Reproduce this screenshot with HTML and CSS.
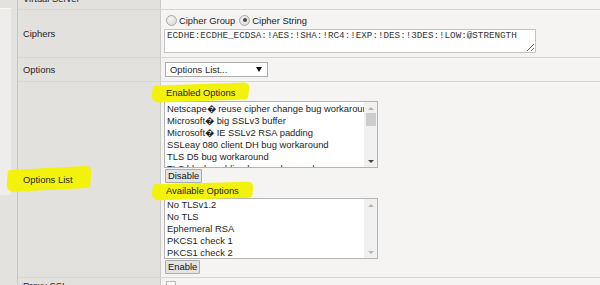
FILE: index.html
```html
<!DOCTYPE html>
<html lang="en">
<head>
    <meta charset="UTF-8">
    <title>SSL Profile - Ciphers</title>
    <link rel="stylesheet" href="styles.css">
</head>
<body>
    <div class="page">
        <div class="rail"><div class="rail-tab"></div></div>
        <div class="form">
            <div class="row row-top">
                <div class="label">Virtual Server</div>
                <div class="value"></div>
            </div>
            <div class="row row-ciphers">
                <div class="label">Ciphers</div>
                <div class="value">
                    <div class="radios">
                        <span class="radio"></span><span class="radio-text">Cipher Group</span>
                        <span class="radio checked"></span><span class="radio-text">Cipher String</span>
                    </div>
                    <textarea class="cipher-text" spellcheck="false">ECDHE:ECDHE_ECDSA:!AES:!SHA:!RC4:!EXP:!DES:!3DES:!LOW:@STRENGTH</textarea>
                </div>
            </div>
            <div class="row row-options">
                <div class="label">Options</div>
                <div class="value">
                    <div class="dropdown">
                        <span>Options List...</span>
                        <span class="dropdown-arrow"></span>
                    </div>
                </div>
            </div>
            <div class="row row-list">
                <div class="label"><span class="marker marker-label">Options List</span></div>
                <div class="value">
                    <div class="caption"><span class="marker marker-enabled">Enabled Options</span></div>
                    <div class="listbox listbox-enabled">
                        <div class="items">
                            <div class="item">Netscape&#xFFFD; reuse cipher change bug workaround</div>
                            <div class="item">Microsoft&#xFFFD; big SSLv3 buffer</div>
                            <div class="item">Microsoft&#xFFFD; IE SSLv2 RSA padding</div>
                            <div class="item">SSLeay 080 client DH bug workaround</div>
                            <div class="item">TLS D5 bug workaround</div>
                            <div class="item">TLS block padding bug workaround</div>
                        </div>
                        <div class="scrollbar">
                            <span class="arrow-up"></span>
                            <span class="thumb"></span>
                            <span class="arrow-down active"></span>
                        </div>
                    </div>
                    <button class="btn">Disable</button>
                    <div class="caption caption-available"><span class="marker marker-available">Available Options</span></div>
                    <div class="listbox listbox-available">
                        <div class="items">
                            <div class="item">No TLSv1.2</div>
                            <div class="item">No TLS</div>
                            <div class="item">Ephemeral RSA</div>
                            <div class="item">PKCS1 check 1</div>
                            <div class="item">PKCS1 check 2</div>
                        </div>
                        <div class="scrollbar">
                            <span class="arrow-up"></span>
                            <span class="arrow-down"></span>
                        </div>
                    </div>
                    <button class="btn">Enable</button>
                </div>
            </div>
            <div class="row row-proxy">
                <div class="label">Proxy SSL</div>
                <div class="value"><span class="checkbox"></span></div>
            </div>
        </div>
    </div>
</body>
</html>
```

FILE: styles.css
```css
body {
    margin: 0;
    background: #f5f4f2;
    font-family: 'Liberation Sans', Arial, sans-serif;
    font-size: 9.4px;
    color: #1e1e1e;
    overflow: hidden;
}

.page {
    display: flex;
    height: 285px;
    overflow: hidden;
}

.rail {
    width: 17px;
    flex-shrink: 0;
    background: #e3e2df;
    border-right: 1px solid #c6c5c2;
}

.rail-tab {
    width: 11px;
    height: 186px;
    background: #eeedeb;
    border-top: 1px solid #f8f8f8;
    margin-top: 8px;
}

.form {
    flex: 1;
    margin-top: -13px;
}

.row {
    display: flex;
    border-bottom: 1px solid #d7d6d3;
}

.label {
    box-sizing: border-box;
    width: 143px;
    flex-shrink: 0;
    padding-left: 5px;
    background: #e2e1de;
    border-right: 1px solid #cbcac7;
    display: flex;
    align-items: center;
}

.value {
    flex: 1;
    padding: 4px 3px;
}

.row-top { height: 22px; }
.row-ciphers { height: 47px; }
.row-options { height: 23px; }
.row-list { height: 195px; }
.row-proxy { height: 30px; }

.row-list .value { padding-top: 5px; }
.row-proxy .label { align-items: flex-start; padding-top: 2px; }
.row-proxy .value { padding-top: 3px; }

/* radios */
.radios {
    display: flex;
    align-items: center;
    height: 12px;
    margin-left: 2px;
    margin-bottom: 3px;
}

.radio {
    box-sizing: border-box;
    width: 11px;
    height: 11px;
    border-radius: 50%;
    border: 1px solid #a9a9a9;
    background: radial-gradient(circle at 40% 35%, #f4f4f4, #d6d6d6);
    display: flex;
    align-items: center;
    justify-content: center;
}

.radio.checked::after {
    content: '';
    width: 4px;
    height: 4px;
    border-radius: 50%;
    background: #4a4a4a;
}

.radio-text {
    margin: 0 4px 0 2px;
}

.cipher-text {
    display: block;
    box-sizing: border-box;
    width: 372px;
    height: 24px;
    margin: 0;
    padding: 0 2px;
    border: 1px solid #c4c4c4;
    background: #fff;
    font-family: 'Liberation Mono', 'Courier New', monospace;
    font-size: 9.25px;
    line-height: 11px;
    color: #333;
    resize: both;
    overflow: hidden;
}

/* dropdown */
.dropdown {
    box-sizing: border-box;
    width: 103px;
    height: 15px;
    margin-left: 1px;
    border: 1px solid #adadad;
    background: #fff;
    display: flex;
    align-items: center;
    justify-content: space-between;
    padding: 0 5px 0 4px;
}

.dropdown-arrow {
    width: 0;
    height: 0;
    border-left: 3px solid transparent;
    border-right: 3px solid transparent;
    border-top: 5px solid #111;
}

/* options lists */
.caption {
    height: 12px;
    line-height: 12px;
    margin-left: 2px;
    margin-bottom: 2px;
}

.caption-available {
    margin-top: 2px;
    margin-bottom: 1px;
}

.marker {
    position: relative;
    z-index: 0;
}

.marker::before {
    content: '';
    position: absolute;
    z-index: -1;
    background: #f2f20c;
    border-radius: 2px 6px 3px 8px;
}

.marker-enabled::before {
    left: -14px;
    right: -14px;
    top: -3px;
    bottom: -3px;
    transform: rotate(-2deg) skewX(-10deg);
}

.marker-available::before {
    left: -14px;
    right: -14px;
    top: -2px;
    bottom: -3px;
    transform: rotate(-1.5deg) skewX(-10deg);
}

.marker-label::before {
    left: -16px;
    right: -18px;
    top: -6px;
    bottom: -5px;
    transform: rotate(-3deg) skewX(-8deg);
}

.listbox {
    box-sizing: border-box;
    width: 214px;
    display: flex;
    border: 1px solid #b4b4b4;
    background: #fff;
    overflow: hidden;
}

.listbox-enabled { height: 67px; }
.listbox-available { height: 61px; }

.items {
    flex: 1;
    min-width: 0;
    padding: 1px 0 0 2px;
}

.listbox-available .items { padding-top: 0; }

.item {
    height: 12px;
    line-height: 12px;
    white-space: nowrap;
    overflow: hidden;
}

.scrollbar {
    width: 13px;
    flex-shrink: 0;
    background: #f0f0f0;
    display: flex;
    flex-direction: column;
    align-items: center;
    padding: 5px 0 4px;
}

.arrow-up,
.arrow-down {
    width: 0;
    height: 0;
    border-left: 3px solid transparent;
    border-right: 3px solid transparent;
}

.arrow-up { border-bottom: 3px solid #b5b5b5; }
.arrow-down { border-top: 3px solid #b5b5b5; margin-top: auto; }
.arrow-down.active { border-top-color: #444; }

.thumb {
    width: 10px;
    height: 13px;
    margin-top: 3px;
    background: #cdcdcd;
}

.btn {
    display: block;
    height: 14px;
    margin: 1px 0 0 1px;
    padding: 0 2px;
    border: 1px solid #adadad;
    border-radius: 1px;
    background: #e3e3e3;
    font-family: inherit;
    font-size: 9.4px;
    line-height: 12px;
    color: #111;
}

.checkbox {
    display: block;
    box-sizing: border-box;
    width: 10px;
    height: 10px;
    margin: 0 0 0 2px;
    border: 1px solid #b9b9b9;
    background: #fafafa;
}
```
